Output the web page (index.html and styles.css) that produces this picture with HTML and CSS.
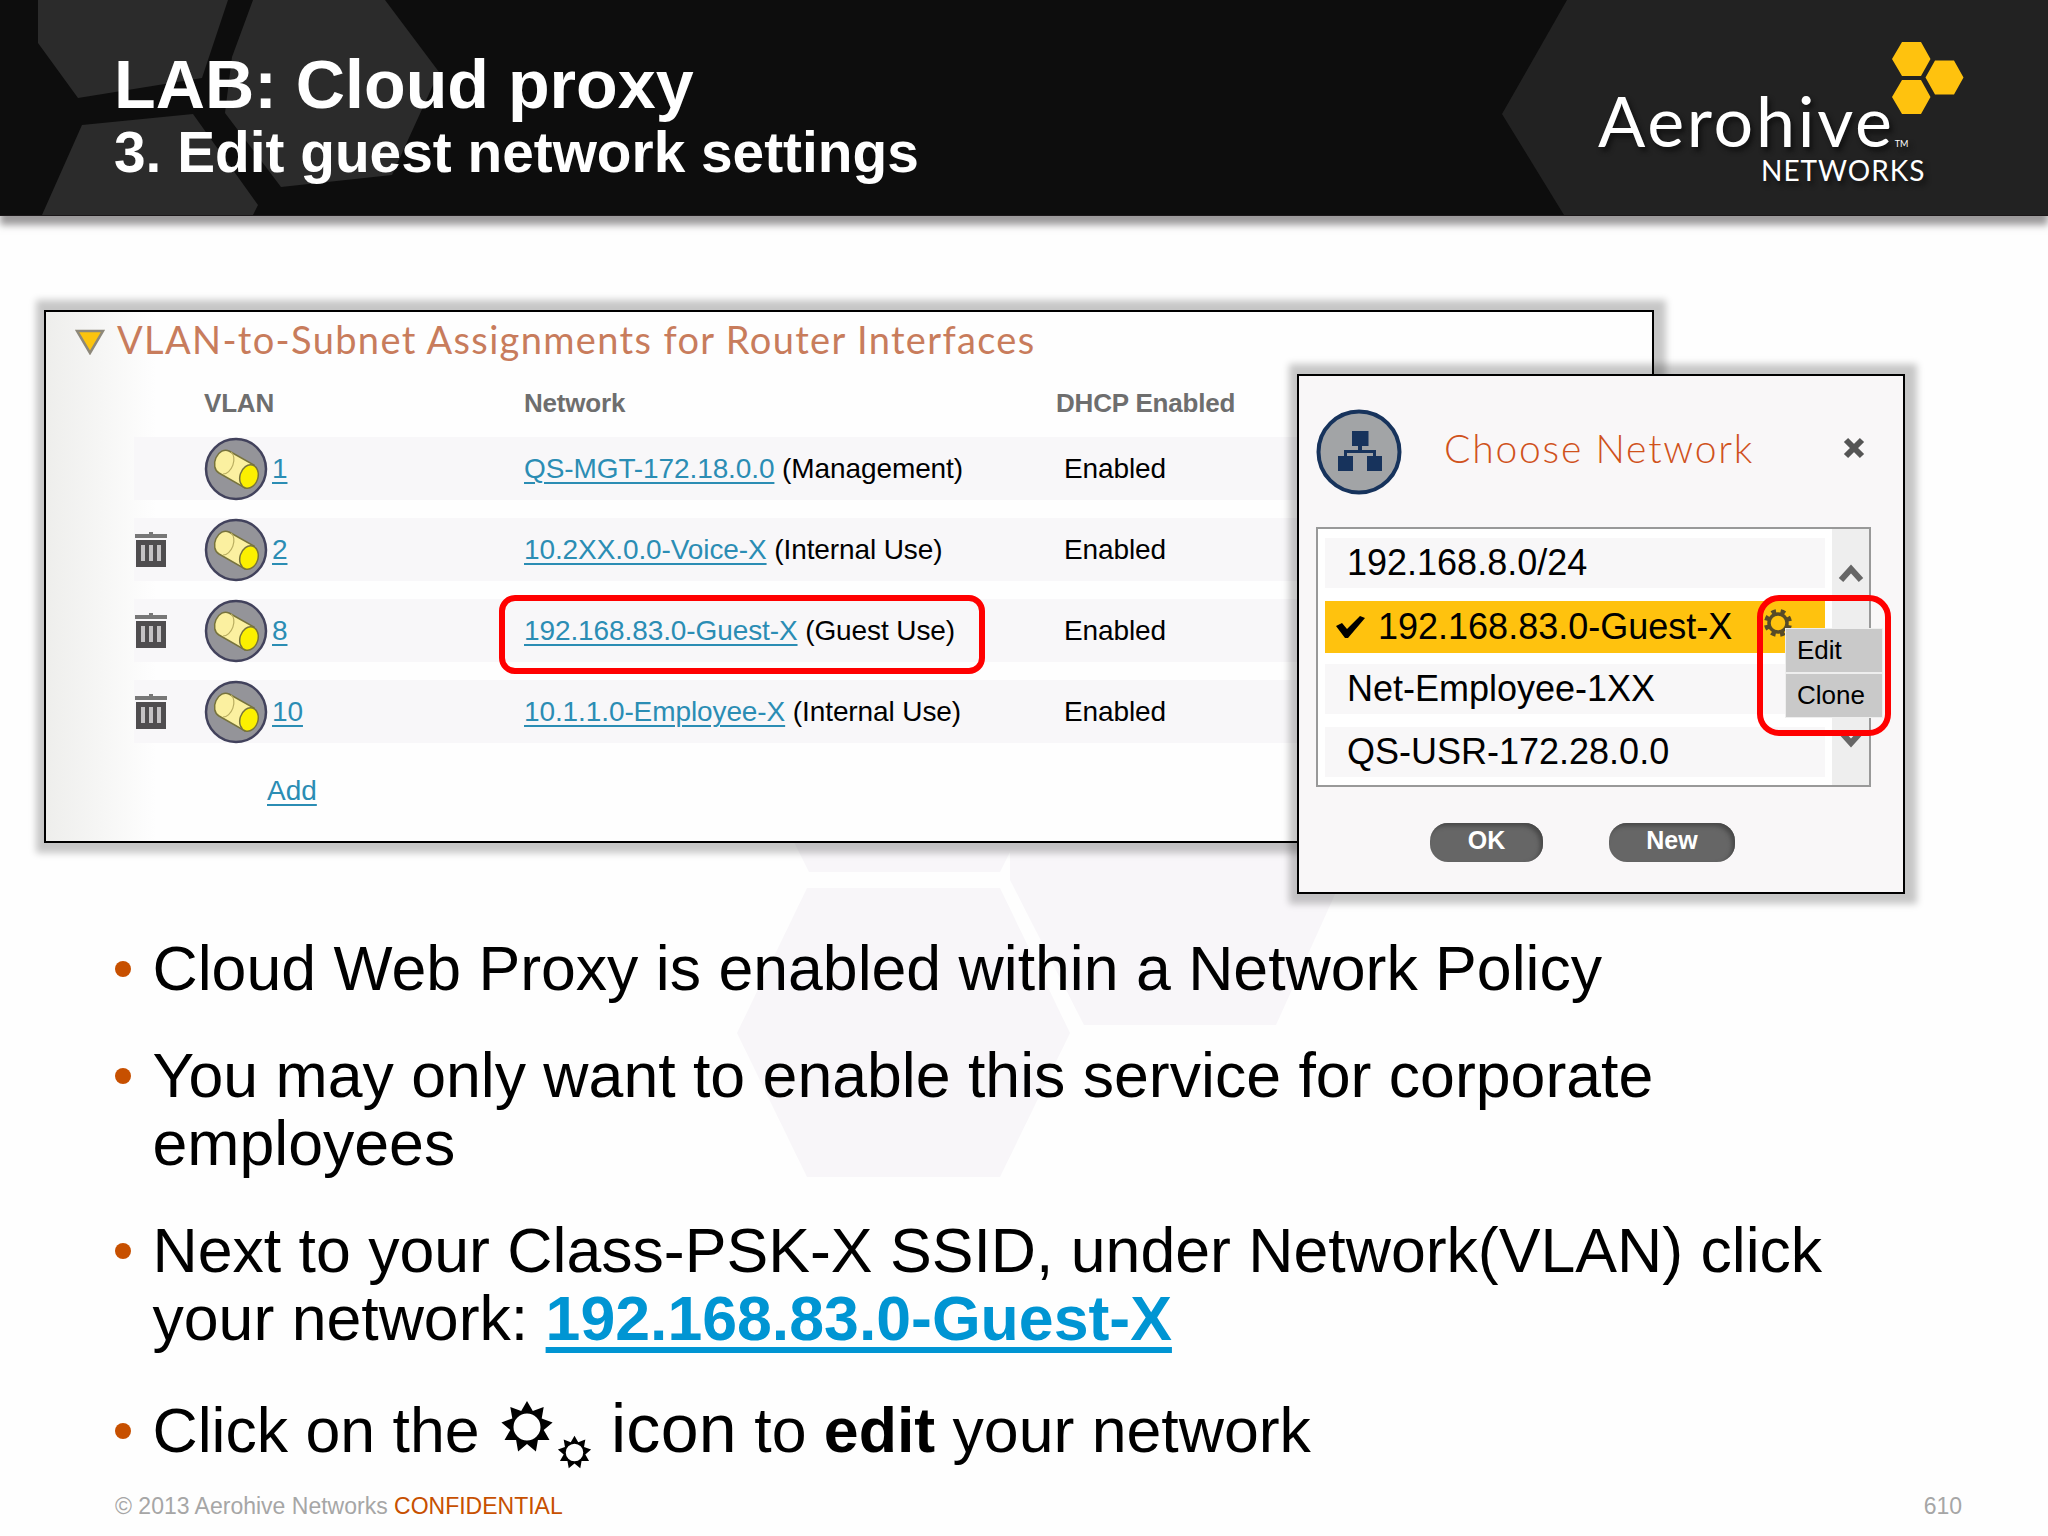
FILE: index.html
```html
<!DOCTYPE html>
<html lang="en">
<head>
<meta charset="utf-8">
<title>LAB: Cloud proxy</title>
<link rel="stylesheet" href="styles.css">
</head>
<body>
<svg class="defs" width="0" height="0" aria-hidden="true">
  <symbol id="vlan" viewBox="-32 -32 64 64">
    <circle r="30" fill="#949499" stroke="#42425c" stroke-width="2.5"/>
    <path d="M-7 -18 L18 -4 L9 19 L-17 4 A9 12 20 0 1 -7 -18Z" fill="#fbf0a0" stroke="#77733c" stroke-width="1.5"/>
    <path d="M-5 -17 A8 12 20 0 1 -13 5" fill="none" stroke="#b9ad60" stroke-width="1.2"/>
    <ellipse cx="13" cy="7.500" rx="9" ry="12" transform="rotate(17 13 7.500)" fill="#fcf000" stroke="#77733c" stroke-width="1.5"/>
  </symbol>
  <symbol id="trash" viewBox="0 0 34 36">
    <path d="M15 0h4v2h14v4H1V2h14z" fill="#777"/>
    <path d="M2 8h30v27H2z" fill="#4f4d4f"/>
    <path d="M7 13h4v16H7zM15 13h4v16h-4zM23 13h4v16h-4z" fill="#c4c2c4"/>
  </symbol>
  <symbol id="sun" viewBox="-27 -27 54 54">
    <path fill-rule="evenodd" d="M0 -26L5.800 -16L16.700 -19.900L14.700 -8.500L25.600 -4.500L16.700 3L22.500 13L10.900 13L8.900 24.400L0 17L-8.900 24.400L-10.900 13L-22.500 13L-16.700 3L-25.600 -4.500L-14.700 -8.500L-16.700 -19.900L-5.800 -16ZM13.500 0A13.500 13.500 0 1 0 -13.500 0A13.500 13.500 0 1 0 13.500 0Z"/>
  </symbol>
</svg>
<main class="slide">
  <svg class="backdrop" viewBox="0 0 2048 1536" aria-hidden="true">
    <g fill="#f8f6f9">
      <path d="M807 888H1000L1070 1033L1000 1177H807L737 1033Z"/>
      <path d="M1010 840V880L1084 1025H1276L1346 870V840Z"/>
      <path d="M793 840L809 872H1000L1016 840Z"/>
    </g>
  </svg>
  <header class="banner">
    <svg class="banner-art" viewBox="0 0 2048 215" aria-hidden="true">
      <path fill="#2b2b2b" d="M38 0V43L78 98L202 78L228 0ZM253 0H385L439 72L392 175L281 187L225 113L232 57ZM82 125L193 114L258 205L253 215H42Z"/>
      <path fill="#222" d="M1567 0L1502 114L1564 215H2048V0Z"/>
    </svg>
    <div class="titles">
      <h1>LAB: Cloud proxy</h1>
      <h2>3. Edit guest network settings</h2>
    </div>
    <div class="logo">
      <div class="brand">Aerohive<span class="tm">TM</span></div>
      <div class="brand-sub">NETWORKS</div>
      <svg class="comb" viewBox="0 0 72 73" aria-hidden="true">
        <path fill="#ffc20e" d="M10 0H29L38.500 17L29 34H10L0 17ZM43 18.500H62L71.500 35.500L62 52.500H43L33.500 35.500ZM10 38H29L38.500 55L29 72H10L0 55Z"/>
      </svg>
    </div>
  </header>

  <section class="panel">
    <div class="panel-head">
      <svg width="30" height="26" viewBox="0 0 30 26"><path d="M2 2H28L15 24Z" fill="#fcc40e" stroke="#8d887a" stroke-width="2.500"/></svg>
      <h3>VLAN-to-Subnet Assignments for Router Interfaces</h3>
    </div>
    <div class="row head"><span></span><span>VLAN</span><span>Network</span><span>DHCP Enabled</span></div>
    <div class="row"><span></span><span class="vlan"><svg><use href="#vlan"/></svg><a>1</a></span><span><a>QS-MGT-172.18.0.0</a> (Management)</span><span class="state">Enabled</span></div>
    <div class="row"><svg class="trash"><use href="#trash"/></svg><span class="vlan"><svg><use href="#vlan"/></svg><a>2</a></span><span><a>10.2XX.0.0-Voice-X</a> (Internal Use)</span><span class="state">Enabled</span></div>
    <div class="row"><svg class="trash"><use href="#trash"/></svg><span class="vlan"><svg><use href="#vlan"/></svg><a>8</a></span><span class="marked"><a>192.168.83.0-Guest-X</a> (Guest Use)</span><span class="state">Enabled</span></div>
    <div class="row"><svg class="trash"><use href="#trash"/></svg><span class="vlan"><svg><use href="#vlan"/></svg><a>10</a></span><span><a>10.1.1.0-Employee-X</a> (Internal Use)</span><span class="state">Enabled</span></div>
    <a class="add">Add</a>
  </section>

  <section class="dialog">
    <div class="dialog-head">
      <svg width="86" height="86" viewBox="-43 -43 86 86"><circle r="40.500" fill="#a2a4a6" stroke="#17335c" stroke-width="4"/><path fill="#17335c" d="M-7 -21H9.500V-6H3V-2H17V4H23V19H8V4H14V1H-12V4H-6V19H-21V4H-15V-2H-1V-6H-7Z"/></svg>
      <h3>Choose Network</h3>
      <svg class="close" width="22" height="22" viewBox="0 0 22 22"><path d="M3 3L19 19M19 3L3 19" stroke="#555" stroke-width="6"/></svg>
    </div>
    <div class="list">
      <ul class="items">
        <li>192.168.8.0/24</li>
        <li class="selected"><svg class="tick" width="32" height="26" viewBox="0 0 32 26"><path d="M2 12L8 9L13 15L26 2L31 4L14 24H11Z"/></svg>192.168.83.0-Guest-X<svg class="cog" width="30" height="30" viewBox="-15 -15 30 30"><circle r="9" fill="none" stroke="#574b28" stroke-width="3.500"/><circle r="12" fill="none" stroke="#574b28" stroke-width="4" stroke-dasharray="4.710 4.710" stroke-dashoffset="-2.350"/></svg></li>
        <li>Net-Employee-1XX</li>
        <li>QS-USR-172.28.0.0</li>
      </ul>
      <div class="scroll">
        <svg width="26" height="20" viewBox="0 0 26 20"><path d="M3 17L13 6L23 17" fill="none" stroke="#666" stroke-width="6"/></svg>
        <svg width="26" height="20" viewBox="0 0 26 20"><path d="M3 3L13 14L23 3" fill="none" stroke="#666" stroke-width="6"/></svg>
      </div>
    </div>
    <div class="buttons"><button class="ok">OK</button><button class="new">New</button></div>
    <div class="menu"><span>Edit</span><span>Clone</span></div>
    <div class="menu-mark"></div>
  </section>

  <ul class="bullets">
    <li>Cloud Web Proxy is enabled within a Network Policy</li>
    <li>You may only want to enable this service for corporate<br>employees</li>
    <li>Next to your Class-PSK-X SSID, under Network(VLAN) click<br>your network: <a>192.168.83.0-Guest-X</a></li>
    <li>Click on the <span class="suns"><svg class="sun"><use href="#sun"/></svg><svg class="sun small"><use href="#sun"/></svg></span><span class="icon-word">icon</span> to <b>edit</b> your network</li>
  </ul>

  <footer class="foot"><span>© 2013 Aerohive Networks <em>CONFIDENTIAL</em></span><span>610</span></footer>
</main>
</body>
</html>
```
FILE: styles.css
```css
*, *::before, *::after { box-sizing: border-box; }
body { margin: 0; }
h1, h2, h3, ul { margin: 0; padding: 0; }
ul { list-style: none; }

.slide {
  position: relative;
  display: flex;
  flex-direction: column;
  width: 2048px;
  height: 1536px;
  overflow: hidden;
  background: #fefefe;
  color: #000;
  font-family: "Liberation Sans", Arial, sans-serif;
}
.defs { position: absolute; }
.backdrop { position: absolute; left: 0; top: 0; width: 2048px; height: 1536px; }

/* Banner */
.banner {
  position: relative;
  flex: none;
  display: flex;
  justify-content: space-between;
  height: 216px;
  background: #0d0d0d;
  border-bottom: 1px solid #1c181a;
  box-shadow: 0 9px 7px rgba(60, 55, 58, .5);
}
.banner-art { position: absolute; left: 0; top: 0; width: 2048px; height: 215px; }
.titles { position: relative; padding: 48px 0 0 114px; color: #fff; }
.titles h1 { font-size: 68.2px; line-height: 72px; white-space: nowrap; }
.titles h2 { padding-top: 1px; font-size: 56.8px; line-height: 64px; white-space: nowrap; }
.logo {
  position: relative;
  width: 450px;
  padding-top: 78px;
  color: #fff;
  font-family: "Century Gothic", "URW Gothic", Lato, sans-serif;
  text-shadow: 3px 4px 5px #111;
}
.brand { height: 84px; font-size: 70px; line-height: 84px; letter-spacing: 2.7px; white-space: nowrap; }
.tm { font-size: 9px; letter-spacing: 0; }
.brand-sub { margin-top: -5px; padding-left: 163px; font-size: 28px; line-height: 26px; letter-spacing: 1px; }
.comb { position: absolute; left: 294px; top: 42px; width: 72px; height: 73px; }

/* VLAN table */
.panel {
  position: relative;
  flex: none;
  width: 1610px;
  height: 533px;
  margin: 94px 0 0 44px;
  border: 2px solid #000;
  background: linear-gradient(90deg, #eeeeec 0, #fefefe 110px);
  box-shadow: 2px 0 7px 10px rgba(0, 0, 0, .22);
}
.panel-head { display: flex; align-items: center; gap: 12px; height: 60px; padding-left: 29px; }
.panel h3, .dialog h3 {
  color: #c4623c;
  font: 400 38px/50px "Century Gothic", "URW Gothic", Lato, sans-serif;
  white-space: nowrap;
}
.panel h3 { margin-top: -6px; color: #c87c5c; letter-spacing: 1.35px; }
.row {
  display: grid;
  grid-template-columns: 70px 320px 532px 1fr;
  align-items: center;
  height: 63px;
  margin: 0 0 18px 88px;
  background: #f8f7f9;
  font-size: 28px;
  letter-spacing: -.1px;
  white-space: nowrap;
}
.row.head { height: 62px; margin-bottom: 3px; background: none; color: #6e6e6e; font-size: 26px; font-weight: bold; letter-spacing: -.2px; line-height: 26px; }
.row > span { position: relative; }
.row a, .add { color: #2b8db4; text-decoration: underline; text-decoration-thickness: 2px; text-underline-offset: 4px; }
.trash { width: 34px; height: 36px; }
.vlan { display: flex; align-items: center; gap: 4px; }
.vlan svg { width: 64px; height: 64px; }
.state { padding-left: 8px; }
.marked::after {
  content: "";
  position: absolute;
  left: -25px;
  top: -20px;
  width: 486px;
  height: 79px;
  border: 6px solid #f00;
  border-radius: 16px;
}
.add { display: block; margin: 32px 0 0 221px; font-size: 28px; line-height: 32px; }

/* Network dialog */
.dialog {
  position: absolute;
  left: 1297px;
  top: 374px;
  width: 608px;
  height: 520px;
  padding: 33px 0 0 17px;
  border: 2px solid #000;
  background: #f9f7f8;
  box-shadow: 2px 0 7px 10px rgba(0, 0, 0, .22);
}
.dialog-head { display: flex; align-items: center; height: 86px; }
.dialog h3 { width: 399px; margin: -9px 0 0 42px; color: #d0521c; font-weight: 300; font-size: 39px; letter-spacing: 1.8px; }
.close { margin-top: -8px; }
.list { display: flex; width: 555px; height: 260px; margin-top: 32px; border: 2px solid #999; background: #fff; }
.items { width: 502px; margin: 9px 7px 0 7px; }
.items li {
  display: flex;
  align-items: center;
  height: 50px;
  margin-bottom: 13px;
  padding-left: 22px;
  background: #f8f7f8;
  font-size: 36px;
  white-space: nowrap;
}
.items .selected { height: 52px; margin-bottom: 11px; padding-left: 9px; background: #ffc20e; }
.tick { margin-right: 12px; }
.cog { margin: -8px 0 0 31px; }
.scroll { display: flex; flex-direction: column; justify-content: space-between; align-items: center; width: 37px; padding: 34px 0 36px; background: #eee; }
.buttons { display: flex; gap: 66px; margin: 36px 0 0 114px; }
.buttons button {
  height: 39px;
  padding: 0 0 5px;
  border: 0;
  border-radius: 18px;
  background: #666;
  box-shadow: inset -3px 3px 4px #484848;
  color: #fff;
  font: bold 25px/32px "Liberation Sans", Arial, sans-serif;
}
.buttons .ok { width: 113px; }
.buttons .new { width: 126px; }
.menu { position: absolute; left: 487px; top: 253px; width: 96px; }
.menu span {
  display: block;
  height: 43px;
  margin-bottom: 2px;
  padding-left: 11px;
  background: #c9c9c9;
  box-shadow: 0 0 0 1px #eee;
  font-size: 26px;
  line-height: 43px;
}
.menu-mark { position: absolute; left: 458px; top: 219px; width: 134px; height: 141px; border: 6px solid #f00; border-radius: 22px; }

/* Bullets */
.bullets { position: relative; margin: 91px 0 0 152.5px; }
.bullets li { position: relative; margin-bottom: 39px; font-size: 62.6px; line-height: 68px; white-space: nowrap; }
.bullets li:last-child { margin-top: 44px; margin-bottom: 0; }
.bullets li::before {
  content: "";
  position: absolute;
  left: -37.5px;
  top: 26.5px;
  width: 16px;
  height: 16px;
  border-radius: 50%;
  background: #c75000;
}
.bullets a { color: #0095d3; font-weight: bold; text-decoration: underline; text-decoration-thickness: 6px; text-underline-offset: 7px; }
.suns { display: inline-flex; height: 50px; margin: 0 19px 0 3px; vertical-align: -2px; }
.sun { width: 54px; height: 54px; }
.sun.small { width: 35px; height: 35px; margin: 35px 0 0 3px; }
.icon-word { font-size: 68px; line-height: 60px; letter-spacing: .3px; }

.foot { position: absolute; left: 115px; right: 86px; top: 1492px; display: flex; justify-content: space-between; color: #a6a6a6; font-size: 23px; line-height: 28px; }
.foot em { color: #c75000; font-style: normal; }
```
